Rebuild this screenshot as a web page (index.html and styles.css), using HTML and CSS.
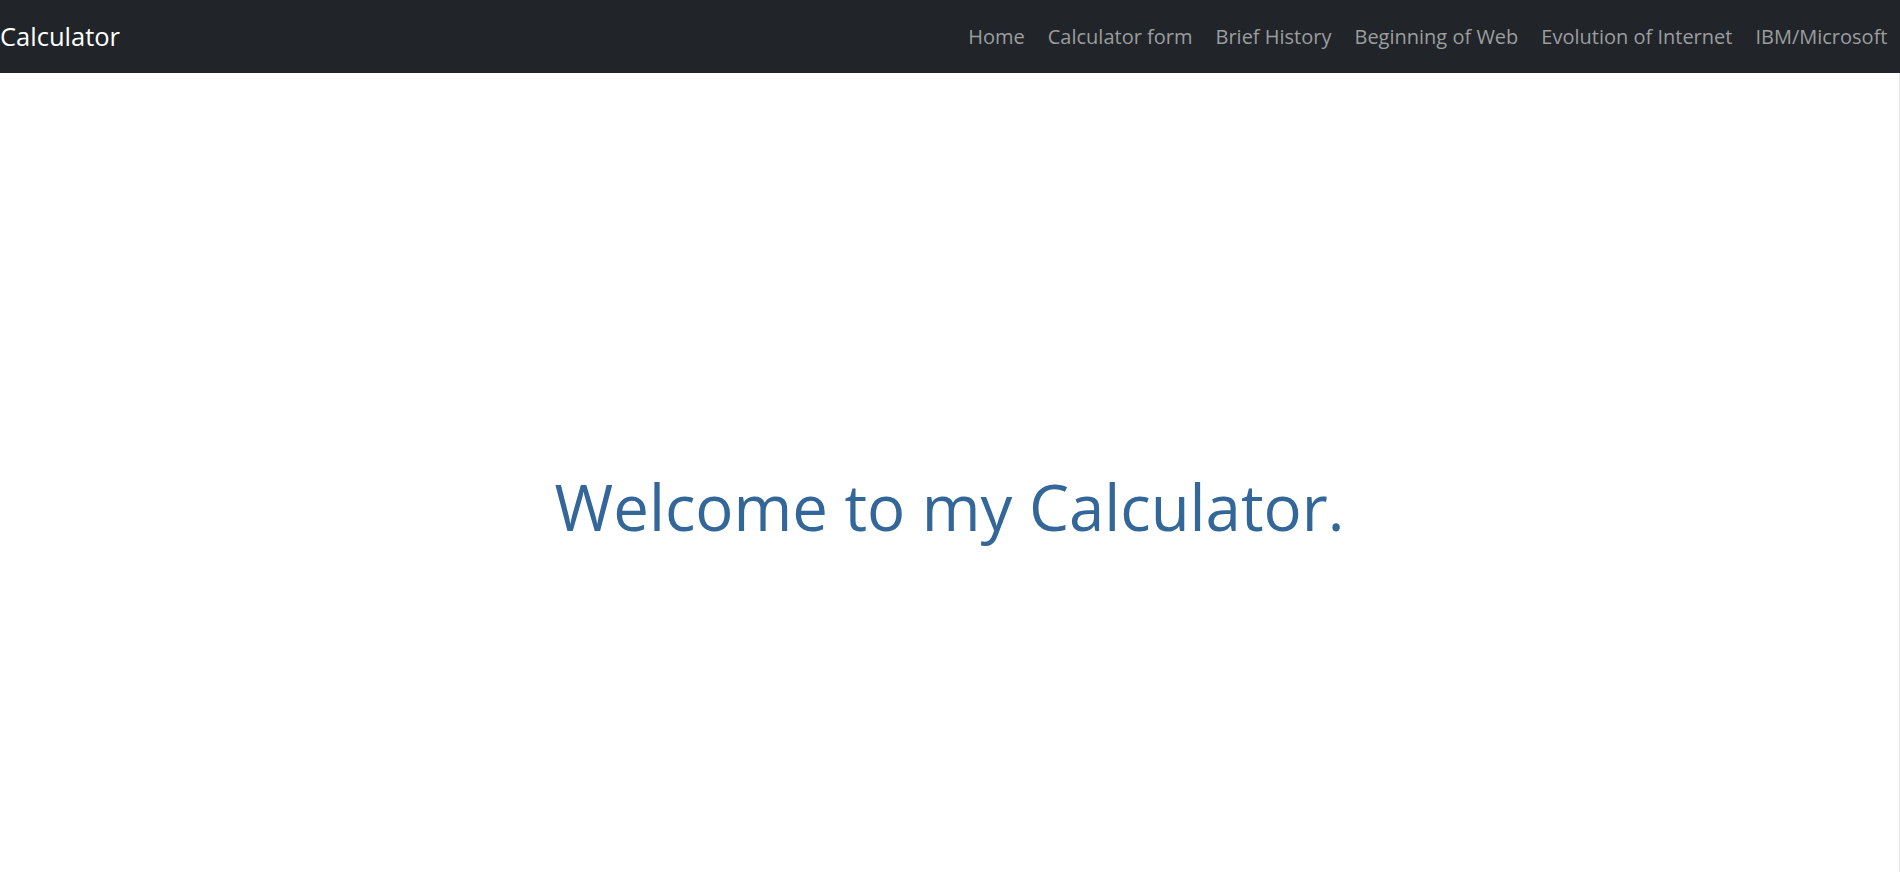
FILE: index.html
```html
<!DOCTYPE html>
<html lang="en">
<head>
<meta charset="utf-8">
<title>Calculator</title>
<link rel="stylesheet" href="styles.css">
</head>
<body>
<nav class="navbar">
  <a class="brand" href="#">Calculator</a>
  <ul class="nav-links">
    <li><a href="#">Home</a></li>
    <li><a href="#">Calculator form</a></li>
    <li><a href="#">Brief History</a></li>
    <li><a href="#">Beginning of Web</a></li>
    <li><a href="#">Evolution of Internet</a></li>
    <li><a href="#">IBM/Microsoft</a></li>
  </ul>
</nav>
<main class="main">
  <h1 class="welcome">Welcome to my Calculator.</h1>
</main>
</body>
</html>
```
FILE: styles.css
```css
html, body {
  margin: 0;
  padding: 0;
  height: 100%;
}
body {
  font-family: "Open Sans", "Noto Sans", sans-serif;
  background: #ffffff;
  display: flex;
  flex-direction: column;
}
.navbar {
  height: 73px;
  background: #212529;
  display: flex;
  align-items: center;
  justify-content: space-between;
  padding: 0 1px 0 0;
  box-sizing: border-box;
  flex: none;
}
.brand {
  color: #ffffff;
  text-decoration: none;
  font-size: 25.5px;
  line-height: 30px;
  margin-top: -1px;
}
.nav-links {
  list-style: none;
  margin: 0;
  padding: 0;
  display: flex;
}
.nav-links a {
  display: block;
  padding: 0 11.5px;
  color: #9b9d9f;
  text-decoration: none;
  font-size: 20px;
  line-height: 26px;
}
.main {
  flex: 1;
  display: flex;
  justify-content: center;
  border-right: 1px solid #e6e6e6;
}
.welcome {
  margin: 0;
  padding-top: 394px;
  font-weight: 400;
  font-size: 63.5px;
  line-height: 80px;
  color: #336699;
}
```
